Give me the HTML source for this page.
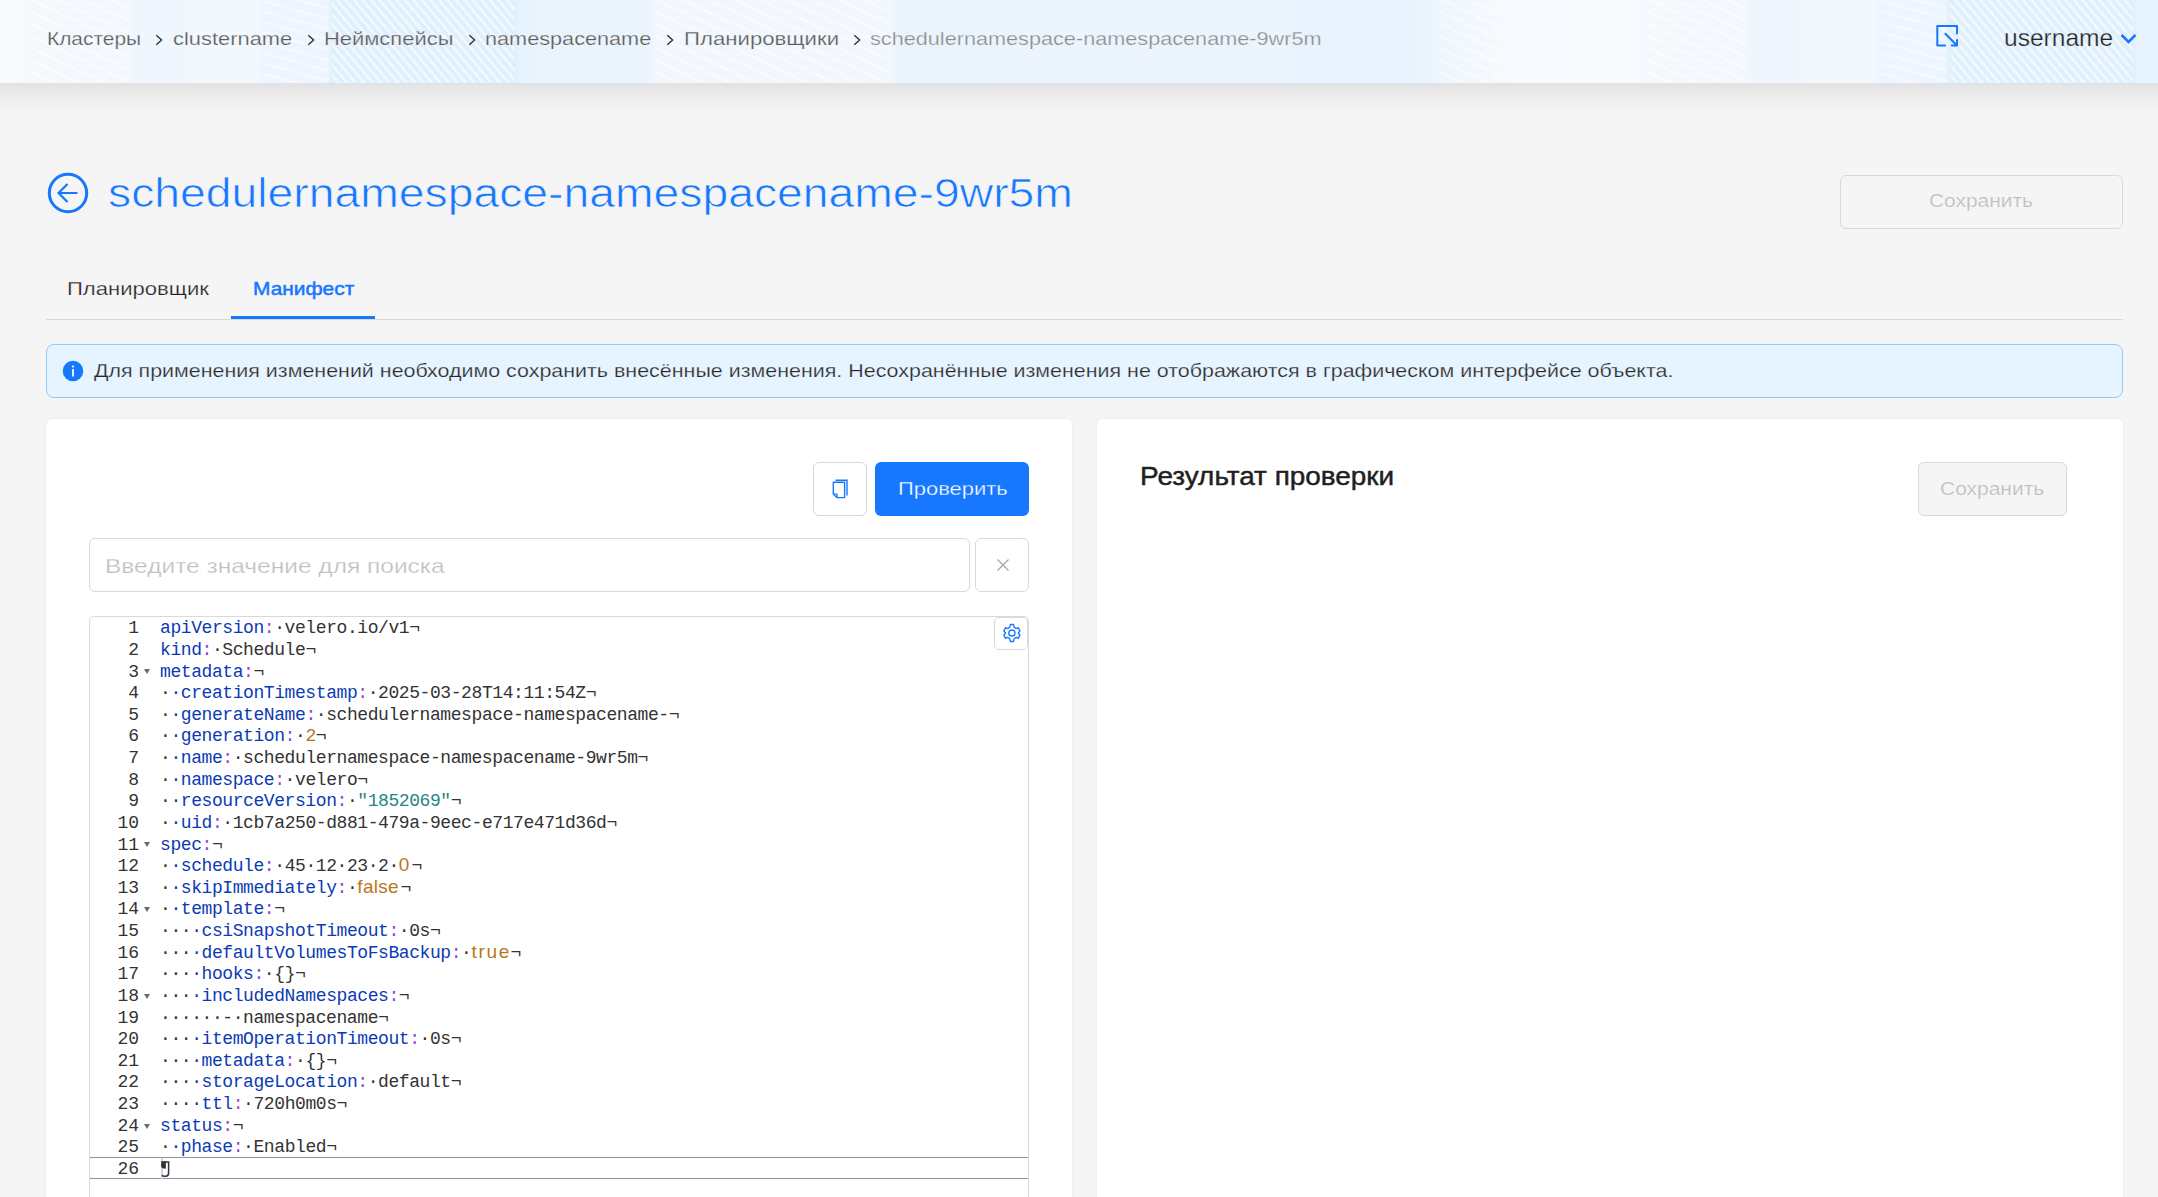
<!DOCTYPE html>
<html lang="ru">
<head>
<meta charset="utf-8">
<title>schedulernamespace-namespacename-9wr5m</title>
<style>
*{box-sizing:border-box;margin:0;padding:0}
html,body{width:2158px;height:1197px;overflow:hidden}
body{background:#f5f5f5;font-family:"Liberation Sans",sans-serif;position:relative;color:#1f1f1f}
.a{position:absolute;white-space:nowrap;line-height:1}
svg{position:absolute;overflow:visible}
#hdr{position:absolute;left:0;top:0;width:2158px;height:83px;background:linear-gradient(90deg,#f8fafe 0px,#f5f9fe 30px,#f4f8fe 128px,#eff6fe 136px,#eff6fe 182px,#f3f8fe 190px,#f3f8fe 255px,#edf5fe 263px,#edf5fe 328px,#e0effc 332px,#e0effc 515px,#e7f3fd 519px,#eaf4fd 560px,#eaf4fd 645px,#f2f7fe 655px,#f2f7fe 890px,#e9f4fd 900px,#e9f4fd 975px,#ecf5fd 985px,#ecf5fd 1285px,#e8f3fd 1295px,#e8f3fd 1415px,#eef6fe 1440px,#f6f9fe 1500px,#f8fafe 1617px,#f8fafe 1618px,#f5f9fe 1648px,#f4f8fe 1746px,#eff6fe 1754px,#eff6fe 1800px,#f3f8fe 1808px,#f3f8fe 1873px,#edf5fe 1881px,#edf5fe 1946px,#e0effc 1950px,#e0effc 2133px,#e7f3fd 2137px)}
#hdr .st{position:absolute;top:0;height:83px;background:repeating-linear-gradient(50deg,rgba(255,255,255,0) 0px,rgba(255,255,255,0) 4px,rgba(255,255,255,.55) 4px,rgba(255,255,255,.55) 6.5px)}
#hdr .st2{position:absolute;top:0;height:83px;background:repeating-linear-gradient(25deg,rgba(255,255,255,0) 0px,rgba(255,255,255,0) 9px,rgba(255,255,255,.5) 9px,rgba(255,255,255,.5) 11px)}
#hdr .st3{position:absolute;top:0;height:83px;background:repeating-linear-gradient(15deg,rgba(255,255,255,0) 0px,rgba(255,255,255,0) 8px,rgba(255,255,255,.5) 8px,rgba(255,255,255,.5) 10px)}
#shadow{position:absolute;left:0;top:83px;width:2158px;height:30px;background:linear-gradient(#e2e2e2,#ebebeb 40%,#f5f5f5)}
.bc{font-size:19px;color:#595959;top:29px;-webkit-text-stroke:0.25px #eef5fd}
.btn{position:absolute;border:1px solid #d9d9d9;border-radius:6px;background:#fff}
.panel{position:absolute;top:419px;height:900px;width:1026px;background:#fff;border-radius:6px;box-shadow:0 0 3px rgba(0,0,0,.06)}
#editor{position:absolute;left:89px;top:616px;width:940px;height:700px;border:1px solid #d9d9d9;border-radius:5px;background:#fff;overflow:hidden}
#gutter{position:absolute;left:0;top:1.3px;width:70px}
.gn{height:21.64px;line-height:21.64px;text-align:right;padding-right:0;width:49px;font-family:"Liberation Mono",monospace;font-size:18px;color:#333}
.fold{position:absolute;left:53.9px;margin-top:7.5px;width:0;height:0;border-left:3.6px solid transparent;border-right:3.6px solid transparent;border-top:5.2px solid #6b6b6b}
#code{position:absolute;left:70px;top:1.3px;font-family:"Liberation Mono",monospace;font-size:18px;letter-spacing:-0.42px}
.ln{height:21.64px;line-height:21.64px;white-space:pre}
.k{color:#0b3bb4}.c{color:#8f46d8}.v{color:#333}.n{color:#b8781a}.nb{display:inline-block;font-family:"Liberation Sans",sans-serif;font-size:19px;line-height:18px}.s{color:#1f8585}
#active{position:absolute;left:0;top:540px;width:940px;height:22.4px;border-top:1px solid #8e8ea8;border-bottom:1px solid #8e8ea8}
</style>
</head>
<body>
<div id="hdr"><div class="st" style="left:332px;width:183px"></div><div class="st" style="left:1950px;width:183px"></div><div class="st2" style="left:30px;width:98px"></div><div class="st2" style="left:1648px;width:98px"></div><div class="st3" style="left:263px;width:65px"></div><div class="st3" style="left:1881px;width:65px"></div><div class="st2" style="left:655px;width:235px"></div><div class="st2" style="left:1440px;width:60px"></div></div>
<div id="shadow"></div>

<!-- breadcrumbs -->
<div class="a bc" style="left:46.6px;transform-origin:0 0;transform:scaleX(1.1001)">Кластеры</div>
<div class="a bc" style="left:172.5px;transform-origin:0 0;transform:scaleX(1.152)">clustername</div>
<div class="a bc" style="left:324.2px;transform-origin:0 0;transform:scaleX(1.1545)">Неймспейсы</div>
<div class="a bc" style="left:485.1px;transform-origin:0 0;transform:scaleX(1.1403)">namespacename</div>
<div class="a bc" style="left:684px;transform-origin:0 0;transform:scaleX(1.1679)">Планировщики</div>
<div class="a bc" style="left:870.3px;color:#8c8c8c;transform-origin:0 0;transform:scaleX(1.1401)">schedulernamespace-namespacename-9wr5m</div>
<svg width="10" height="12" style="left:155px;top:34px"><polyline points="1.3,1.3 6.6,6 1.3,10.7" fill="none" stroke="#333" stroke-width="1.4"/></svg>
<svg width="10" height="12" style="left:306.6px;top:34px"><polyline points="1.3,1.3 6.6,6 1.3,10.7" fill="none" stroke="#333" stroke-width="1.4"/></svg>
<svg width="10" height="12" style="left:467.9px;top:34px"><polyline points="1.3,1.3 6.6,6 1.3,10.7" fill="none" stroke="#333" stroke-width="1.4"/></svg>
<svg width="10" height="12" style="left:665.5px;top:34px"><polyline points="1.3,1.3 6.6,6 1.3,10.7" fill="none" stroke="#333" stroke-width="1.4"/></svg>
<svg width="10" height="12" style="left:853.3px;top:34px"><polyline points="1.3,1.3 6.6,6 1.3,10.7" fill="none" stroke="#333" stroke-width="1.4"/></svg>

<!-- header right -->
<svg width="34" height="34" style="left:1930px;top:20px" viewBox="0 0 34 34">
 <path d="M15.9,25.6 H7.3 V5.9 H27 V14.3" fill="none" stroke="#1677ff" stroke-width="2" stroke-linejoin="round"/>
 <path d="M14.8,13.2 L26.3,24.7 M20.9,25.6 H27 V19.2" fill="none" stroke="#1677ff" stroke-width="2" stroke-linejoin="round"/>
</svg>
<div class="a" style="left:2003.9px;top:27px;font-size:23px;color:#262626;-webkit-text-stroke:0.25px #e9f4fd;transform-origin:0 0;transform:scaleX(1.0674)">username</div>
<svg width="18" height="12" style="left:2119.5px;top:32.5px"><polyline points="1.5,2 8.5,9 15.5,2" fill="none" stroke="#1677ff" stroke-width="2.6"/></svg>

<!-- title -->
<svg width="44" height="44" style="left:45.6px;top:171px" viewBox="0 0 44 44">
 <circle cx="22" cy="22" r="18.7" fill="none" stroke="#1677ff" stroke-width="3"/>
 <path d="M12.5,22 H31.5 M21.5,13 L12.5,22 L21.5,31" fill="none" stroke="#1677ff" stroke-width="2.2"/>
</svg>
<div class="a" style="left:107.8px;top:173px;font-size:41px;color:#1677ff;-webkit-text-stroke:0.7px #f5f5f5;transform-origin:0 0;transform:scaleX(1.1291)">schedulernamespace-namespacename-9wr5m</div>
<div class="btn" style="left:1840px;top:175px;width:283px;height:54px;background:transparent"></div>
<div class="a" style="left:1929.3px;top:191px;font-size:19px;color:#bfbfbf;-webkit-text-stroke:0.2px #f5f5f5;transform-origin:0 0;transform:scaleX(1.1011)">Сохранить</div>

<!-- tabs -->
<div class="a" style="left:67.4px;top:278.5px;font-size:19px;color:#1f1f1f;-webkit-text-stroke:0.25px #f5f5f5;transform-origin:0 0;transform:scaleX(1.1615)">Планировщик</div>
<div class="a" style="left:253px;top:278.5px;font-size:19px;color:#1677ff;-webkit-text-stroke:0.5px #1677ff;transform-origin:0 0;transform:scaleX(1.0989)">Манифест</div>
<div style="position:absolute;left:46px;top:319px;width:2077px;height:1px;background:#d9d9d9"></div>
<div style="position:absolute;left:231px;top:316px;width:144px;height:3px;background:#1677ff"></div>

<!-- alert -->
<div style="position:absolute;left:46px;top:344px;width:2077px;height:54px;border:1px solid #91caff;background:#e6f4ff;border-radius:8px"></div>
<svg width="22" height="22" style="left:62.4px;top:359.5px" viewBox="0 0 22 22">
 <circle cx="11" cy="11" r="10.3" fill="#1677ff"/>
 <rect x="10.1" y="9" width="1.8" height="7.5" fill="#fff"/><circle cx="11" cy="6.5" r="1.1" fill="#fff"/>
</svg>
<div class="a" style="left:93.9px;top:361px;font-size:19px;color:#262626;-webkit-text-stroke:0.25px #e6f4ff;transform-origin:0 0;transform:scaleX(1.128)">Для применения изменений необходимо сохранить внесённые изменения. Несохранённые изменения не отображаются в графическом интерфейсе объекта.</div>

<!-- panels -->
<div class="panel" style="left:46px"></div>
<div class="panel" style="left:1097px"></div>

<!-- left panel -->
<div class="btn" style="left:813px;top:462px;width:54px;height:54px"></div>
<svg width="20" height="22" style="left:831px;top:478px" viewBox="0 0 20 22">
 <path d="M4.5,2.3 H16 V17.5" fill="none" stroke="#1677ff" stroke-width="1.4"/>
 <path d="M2.3,4.3 H13.6 V19.6 H6 L2.3,16 Z" fill="none" stroke="#1677ff" stroke-width="1.4" stroke-linejoin="round"/>
 <path d="M2.3,16 H6 V19.6" fill="none" stroke="#1677ff" stroke-width="1.2"/>
</svg>
<div style="position:absolute;left:875px;top:462px;width:154px;height:54px;background:#1677ff;border-radius:6px"></div>
<div class="a" style="left:897.7px;top:479px;font-size:19px;color:#fff;-webkit-text-stroke:0.3px #1677ff;transform-origin:0 0;transform:scaleX(1.1549)">Проверить</div>

<div class="btn" style="left:89px;top:538px;width:881px;height:54px"></div>
<div class="a" style="left:105.4px;top:555px;font-size:21px;color:#bfbfbf;-webkit-text-stroke:0.25px #fff;transform-origin:0 0;transform:scaleX(1.1664)">Введите значение для поиска</div>
<div class="btn" style="left:975px;top:538px;width:54px;height:54px"></div>
<svg width="14" height="14" style="left:995.5px;top:557.5px"><path d="M1.5,1.5 L12.5,12.5 M12.5,1.5 L1.5,12.5" stroke="#a6a6a6" stroke-width="1.3"/></svg>

<div id="editor">
<div id="active"></div>
<div style="position:absolute;left:71px;top:541px;width:2px;height:21px;background:#d4d4dc"></div>
<div id="gutter"><div class="gn">1</div>
<div class="gn">2</div>
<div class="gn">3</div>
<div class="gn">4</div>
<div class="gn">5</div>
<div class="gn">6</div>
<div class="gn">7</div>
<div class="gn">8</div>
<div class="gn">9</div>
<div class="gn">10</div>
<div class="gn">11</div>
<div class="gn">12</div>
<div class="gn">13</div>
<div class="gn">14</div>
<div class="gn">15</div>
<div class="gn">16</div>
<div class="gn">17</div>
<div class="gn">18</div>
<div class="gn">19</div>
<div class="gn">20</div>
<div class="gn">21</div>
<div class="gn">22</div>
<div class="gn">23</div>
<div class="gn">24</div>
<div class="gn">25</div>
<div class="gn">26</div><div class="fold" style="top:43.28px"></div><div class="fold" style="top:216.40px"></div><div class="fold" style="top:281.32px"></div><div class="fold" style="top:367.88px"></div><div class="fold" style="top:497.72px"></div></div>
<div id="code"><div class="ln"><span class="k">apiVersion</span><span class="c">:</span><span class="v">·</span><span class="v">velero.io/v1</span><span class="v">¬</span></div>
<div class="ln"><span class="k">kind</span><span class="c">:</span><span class="v">·</span><span class="v">Schedule</span><span class="v">¬</span></div>
<div class="ln"><span class="k">metadata</span><span class="c">:</span><span class="v">¬</span></div>
<div class="ln"><span class="v">·</span><span class="k">·</span><span class="k">creationTimestamp</span><span class="c">:</span><span class="v">·</span><span class="v">2025-03-28T14:11:54Z</span><span class="v">¬</span></div>
<div class="ln"><span class="v">·</span><span class="k">·</span><span class="k">generateName</span><span class="c">:</span><span class="v">·</span><span class="v">schedulernamespace-namespacename-</span><span class="v">¬</span></div>
<div class="ln"><span class="v">·</span><span class="k">·</span><span class="k">generation</span><span class="c">:</span><span class="v">·</span><span class="n">2</span><span class="v">¬</span></div>
<div class="ln"><span class="v">·</span><span class="k">·</span><span class="k">name</span><span class="c">:</span><span class="v">·</span><span class="v">schedulernamespace-namespacename-9wr5m</span><span class="v">¬</span></div>
<div class="ln"><span class="v">·</span><span class="k">·</span><span class="k">namespace</span><span class="c">:</span><span class="v">·</span><span class="v">velero</span><span class="v">¬</span></div>
<div class="ln"><span class="v">·</span><span class="k">·</span><span class="k">resourceVersion</span><span class="c">:</span><span class="v">·</span><span class="s">"1852069"</span><span class="v">¬</span></div>
<div class="ln"><span class="v">·</span><span class="k">·</span><span class="k">uid</span><span class="c">:</span><span class="v">·</span><span class="v">1cb7a250-d881-479a-9eec-e717e471d36d</span><span class="v">¬</span></div>
<div class="ln"><span class="k">spec</span><span class="c">:</span><span class="v">¬</span></div>
<div class="ln"><span class="v">·</span><span class="k">·</span><span class="k">schedule</span><span class="c">:</span><span class="v">·</span><span class="v">45·12·23·2·</span><span class="n nb" style="width:12.6px">0</span><span class="v">¬</span></div>
<div class="ln"><span class="v">·</span><span class="k">·</span><span class="k">skipImmediately</span><span class="c">:</span><span class="v">·</span><span class="n nb" style="width:43.1px;letter-spacing:0.3px">false</span><span class="v">¬</span></div>
<div class="ln"><span class="v">·</span><span class="k">·</span><span class="k">template</span><span class="c">:</span><span class="v">¬</span></div>
<div class="ln"><span class="v">···</span><span class="k">·</span><span class="k">csiSnapshotTimeout</span><span class="c">:</span><span class="v">·</span><span class="v">0s</span><span class="v">¬</span></div>
<div class="ln"><span class="v">···</span><span class="k">·</span><span class="k">defaultVolumesToFsBackup</span><span class="c">:</span><span class="v">·</span><span class="n nb" style="width:38.9px;letter-spacing:1.7px">true</span><span class="v">¬</span></div>
<div class="ln"><span class="v">···</span><span class="k">·</span><span class="k">hooks</span><span class="c">:</span><span class="v">·</span><span class="v">{}</span><span class="v">¬</span></div>
<div class="ln"><span class="v">···</span><span class="k">·</span><span class="k">includedNamespaces</span><span class="c">:</span><span class="v">¬</span></div>
<div class="ln"><span class="v">······-·namespacename¬</span></div>
<div class="ln"><span class="v">···</span><span class="k">·</span><span class="k">itemOperationTimeout</span><span class="c">:</span><span class="v">·</span><span class="v">0s</span><span class="v">¬</span></div>
<div class="ln"><span class="v">···</span><span class="k">·</span><span class="k">metadata</span><span class="c">:</span><span class="v">·</span><span class="v">{}</span><span class="v">¬</span></div>
<div class="ln"><span class="v">···</span><span class="k">·</span><span class="k">storageLocation</span><span class="c">:</span><span class="v">·</span><span class="v">default</span><span class="v">¬</span></div>
<div class="ln"><span class="v">···</span><span class="k">·</span><span class="k">ttl</span><span class="c">:</span><span class="v">·</span><span class="v">720h0m0s</span><span class="v">¬</span></div>
<div class="ln"><span class="k">status</span><span class="c">:</span><span class="v">¬</span></div>
<div class="ln"><span class="v">·</span><span class="k">·</span><span class="k">phase</span><span class="c">:</span><span class="v">·</span><span class="v">Enabled</span><span class="v">¬</span></div>
<div class="ln"><svg width="12" height="22" style="position:relative;top:0;left:0;display:inline-block;vertical-align:top" viewBox="0 0 12 22"><path d="M1,6.5 C1,3.3 2.6,2.3 5.9,2.3 V9.8 C2.6,9.8 1,8.6 1,6.5 Z" fill="#333"/><path d="M1,2.9 H8.6 V14 C8.6,16.4 7.7,17.2 5.8,17.2 H3.8 C2.9,17.2 2.4,16.6 2.3,15.9" fill="none" stroke="#333" stroke-width="1.5"/></svg></div></div>
<div class="btn" style="left:904px;top:0px;width:34px;height:33px;border-radius:5px"></div>
</div>
<svg width="17.8" height="20" style="left:1002.8px;top:623.1px" viewBox="0 0 20 20" preserveAspectRatio="none">
 <path d="M8.2,1.6 H11.8 L12.4,4.2 L14.8,5.6 L17.3,4.8 L19,7.9 L17.1,9.9 V10.1 L19,12.1 L17.3,15.2 L14.8,14.4 L12.4,15.8 L11.8,18.4 H8.2 L7.6,15.8 L5.2,14.4 L2.7,15.2 L1,12.1 L2.9,10.1 V9.9 L1,7.9 L2.7,4.8 L5.2,5.6 L7.6,4.2 Z" fill="none" stroke="#1677ff" stroke-width="1.5" stroke-linejoin="round"/>
 <ellipse cx="10" cy="10" rx="3.5" ry="3.1" fill="none" stroke="#1677ff" stroke-width="1.5"/>
</svg>

<!-- right panel -->
<div class="a" style="left:1139.7px;top:464px;font-size:25px;color:#1f1f1f;-webkit-text-stroke:0.45px #1f1f1f;transform-origin:0 0;transform:scaleX(1.1161)">Результат проверки</div>
<div class="btn" style="left:1918px;top:462px;width:149px;height:54px;background:#f5f5f5"></div>
<div class="a" style="left:1939.6px;top:479px;font-size:19px;color:#bfbfbf;-webkit-text-stroke:0.2px #f5f5f5;transform-origin:0 0;transform:scaleX(1.1033)">Сохранить</div>
</body>
</html>
